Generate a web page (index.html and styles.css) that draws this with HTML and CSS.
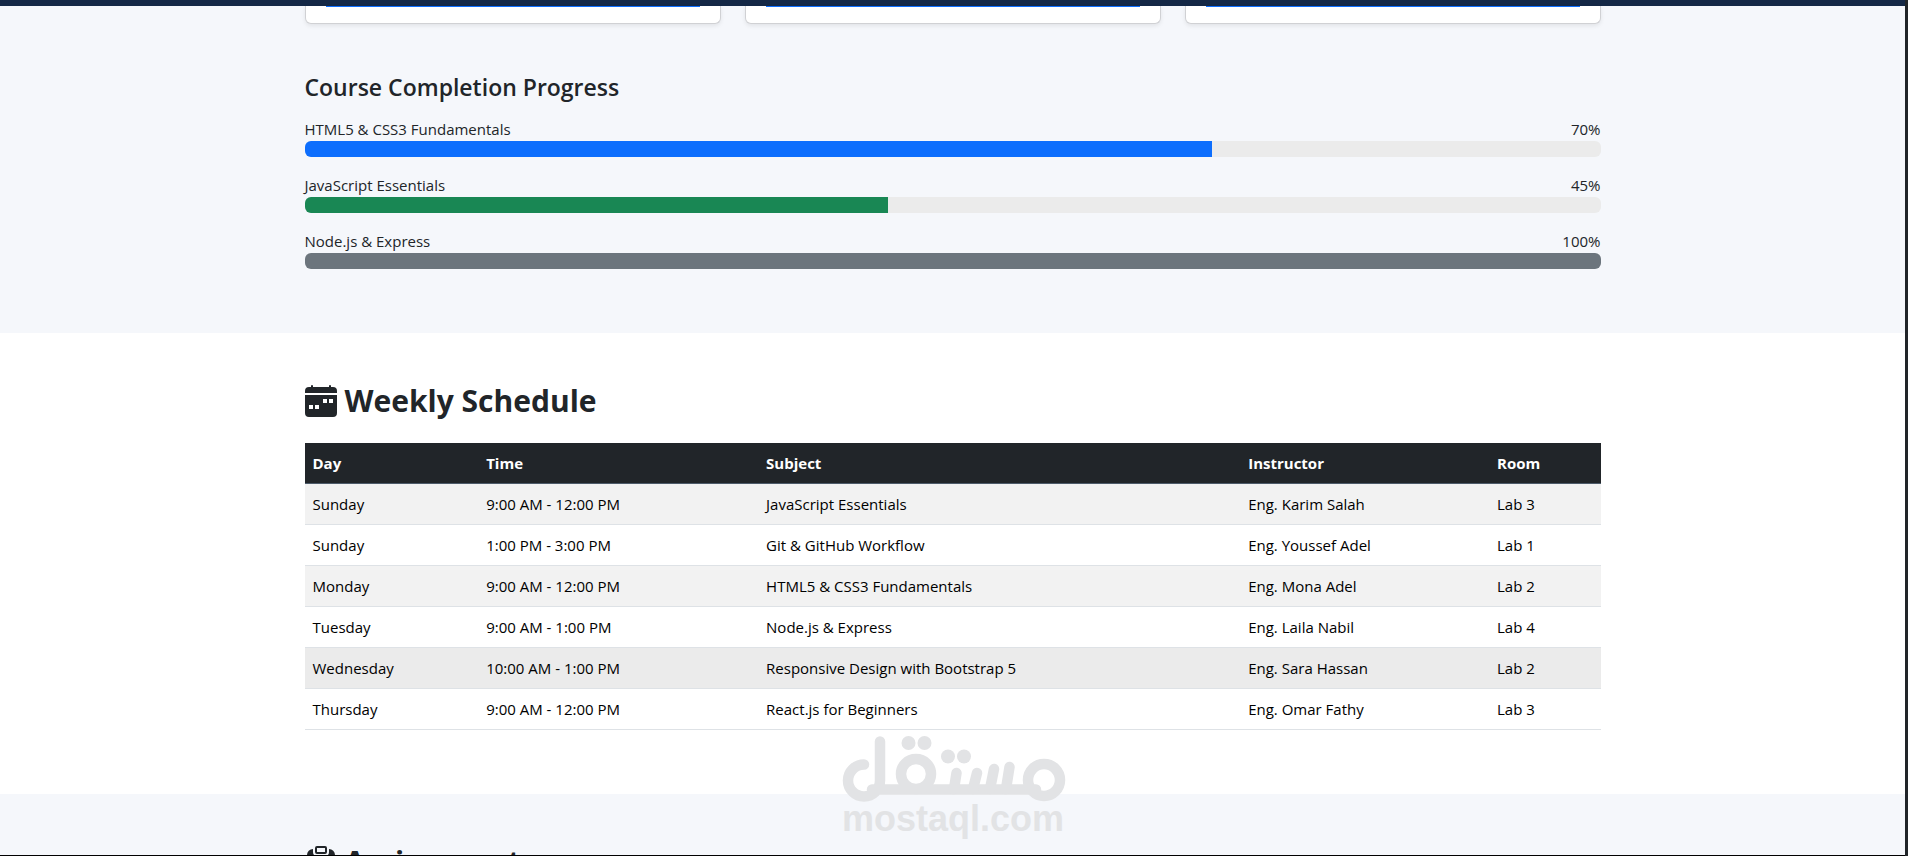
FILE: index.html
```html
<!DOCTYPE html>
<html lang="en">

<head>
  <meta charset="UTF-8">
  <meta name="viewport" content="width=device-width, initial-scale=1.0">
  <title>Student Dashboard</title>
  <link rel="stylesheet" href="styles.css">
</head>

<body>
  <div class="page">
    <nav class="navbar"></nav>

    <section class="section section-light courses">
      <div class="container">
        <div class="course-grid">
          <div class="course-card"><a href="#" class="course-button" aria-label="View course"></a></div>
          <div class="course-card"><a href="#" class="course-button" aria-label="View course"></a></div>
          <div class="course-card"><a href="#" class="course-button" aria-label="View course"></a></div>
        </div>

        <h4 class="progress-title">Course Completion Progress</h4>

        <div class="progress-item">
          <div class="progress-label"><span>HTML5 &amp; CSS3 Fundamentals</span><span>70%</span></div>
          <div class="progress"><div class="progress-bar bar-blue" style="width: 70%"></div></div>
        </div>
        <div class="progress-item">
          <div class="progress-label"><span>JavaScript Essentials</span><span>45%</span></div>
          <div class="progress"><div class="progress-bar bar-green" style="width: 45%"></div></div>
        </div>
        <div class="progress-item">
          <div class="progress-label"><span>Node.js &amp; Express</span><span>100%</span></div>
          <div class="progress"><div class="progress-bar bar-gray" style="width: 100%"></div></div>
        </div>
      </div>
    </section>

    <section class="section" id="schedule">
      <div class="container">
        <h2 class="section-title">
          <svg class="icon" viewBox="0 0 32 32" aria-hidden="true">
            <path fill="currentColor" d="M6 1a1 1 0 0 1 2 0v1h16V1a1 1 0 0 1 2 0v1h2a4 4 0 0 1 4 4v2H0V6a4 4 0 0 1 4-4h2z"/>
            <path fill="currentColor" fill-rule="evenodd" d="M0 10h32v18a4 4 0 0 1-4 4H4a4 4 0 0 1-4-4zM18 14v4h4v-4zM24 14v4h4v-4zM4 20v4h4v-4zM10 20v4h4v-4z"/>
          </svg>
          Weekly Schedule
        </h2>

        <table class="schedule-table">
          <thead>
            <tr>
              <th class="col-day">Day</th>
              <th class="col-time">Time</th>
              <th class="col-subject">Subject</th>
              <th class="col-instructor">Instructor</th>
              <th class="col-room">Room</th>
            </tr>
          </thead>
          <tbody>
            <tr><td>Sunday</td><td>9:00 AM - 12:00 PM</td><td>JavaScript Essentials</td><td>Eng. Karim Salah</td><td>Lab 3</td></tr>
            <tr><td>Sunday</td><td>1:00 PM - 3:00 PM</td><td>Git &amp; GitHub Workflow</td><td>Eng. Youssef Adel</td><td>Lab 1</td></tr>
            <tr><td>Monday</td><td>9:00 AM - 12:00 PM</td><td>HTML5 &amp; CSS3 Fundamentals</td><td>Eng. Mona Adel</td><td>Lab 2</td></tr>
            <tr><td>Tuesday</td><td>9:00 AM - 1:00 PM</td><td>Node.js &amp; Express</td><td>Eng. Laila Nabil</td><td>Lab 4</td></tr>
            <tr class="active"><td>Wednesday</td><td>10:00 AM - 1:00 PM</td><td>Responsive Design with Bootstrap 5</td><td>Eng. Sara Hassan</td><td>Lab 2</td></tr>
            <tr><td>Thursday</td><td>9:00 AM - 12:00 PM</td><td>React.js for Beginners</td><td>Eng. Omar Fathy</td><td>Lab 3</td></tr>
          </tbody>
        </table>
      </div>
    </section>

    <section class="section section-light" id="assignments">
      <div class="container">
        <h2 class="section-title">
          <svg class="icon" viewBox="0 0 32 32" aria-hidden="true">
            <rect x="11" y="1" width="10" height="6" rx="1" fill="none" stroke="currentColor" stroke-width="2"/>
            <path fill="currentColor" d="M8 3v3a4 4 0 0 0 4 4h8a4 4 0 0 0 4-4V3a6 6 0 0 1 6 6v18a5 5 0 0 1-5 5H7a5 5 0 0 1-5-5V9a6 6 0 0 1 6-6z"/>
          </svg>
          Assignments
        </h2>
      </div>
    </section>

    <svg class="watermark" viewBox="0 0 224 104" aria-hidden="true">
      <g fill="none" stroke="currentColor" stroke-width="10.500" stroke-linecap="round">
        <path d="M22 28.500A16 16 0 1 0 38 44.500V5.500M30 53.500H194"/>
        <circle cx="74" cy="38" r="15"/>
        <path d="M112 53l2.500-16M131 53l4-16M148 53l4-20M164 53l3.500-22"/>
        <circle cx="202" cy="44" r="16"/>
      </g>
      <g fill="currentColor">
        <circle cx="66.500" cy="7" r="7"/><circle cx="82.500" cy="7" r="7"/>
        <circle cx="106" cy="20.500" r="7"/><circle cx="122" cy="20.500" r="7"/>
      </g>
      <text class="watermark-text" x="0" y="95">mostaql.com</text>
    </svg>
  </div>
</body>

</html>
```
FILE: styles.css
```css
* {
  box-sizing: border-box;
}

body {
  margin: 0;
  height: 100vh;
  overflow: hidden;
  font-family: "Open Sans", "Noto Sans", sans-serif;
  font-size: 15px;
  line-height: 24px;
  color: #212529;
  background-color: #212529;
}

.page {
  position: relative;
  height: 100vh;
  margin-right: 3px;
  overflow: hidden;
  background-color: #fff;
  border-bottom: 1px solid #000;
}

.navbar {
  height: 6px;
  background-color: #142846;
}

.container {
  max-width: 1320px;
  margin: 0 auto;
  padding: 0 12px;
}

.section {
  padding: 48px 0;
}

.section-light {
  background-color: #f5f7fb;
}

.courses {
  padding-top: 0;
}

.course-grid {
  display: grid;
  grid-template-columns: repeat(3, 1fr);
  gap: 24px;
  margin-bottom: 48px;
}

.course-card {
  height: 18px;
  padding: 0 16px;
  background-color: #fff;
  border: 1px solid #d0d1d4;
  border-top: 0;
  border-radius: 0 0 6px 6px;
  box-shadow: 0 2px 4px rgba(0, 0, 0, 0.08);
}

.course-button {
  display: block;
  height: 1px;
  margin: 0 4px;
  background-color: #0d6efd;
}

.progress-title {
  margin: 0 0 14px;
  font-size: 23px;
  font-weight: 600;
  line-height: 31px;
}

.progress-item {
  margin-bottom: 16px;
}

.progress-label {
  display: flex;
  justify-content: space-between;
}

.progress {
  height: 16px;
  background-color: #ebebeb;
  border-radius: 6px;
  overflow: hidden;
}

.progress-bar {
  height: 100%;
}

.bar-blue {
  background-color: #0d6efd;
}

.bar-green {
  background-color: #198754;
}

.bar-gray {
  background-color: #6c757d;
}

.section-title {
  display: flex;
  align-items: center;
  gap: 8px;
  margin: 0 0 22px;
  font-size: 30px;
  font-weight: 700;
  line-height: 40px;
}

.icon {
  width: 32px;
  height: 32px;
}

.schedule-table {
  width: 100%;
  margin-bottom: 16px;
  table-layout: fixed;
  border-collapse: separate;
  border-spacing: 0;
  color: #000;
}

.schedule-table th,
.schedule-table td {
  padding: 8px;
  text-align: left;
  border-bottom: 1px solid #dee2e6;
}

.schedule-table th {
  color: #fff;
  background-color: #212529;
  border-bottom-color: #4d5b6a;
}

.schedule-table tbody tr:nth-child(odd) {
  background-color: #f2f2f2;
}

.schedule-table tbody tr.active {
  background-color: #ebebeb;
}

.col-day {
  width: 13.4%;
}

.col-time {
  width: 21.6%;
}

.col-subject {
  width: 37.2%;
}

.col-instructor {
  width: 19.2%;
}

.col-room {
  width: 8.6%;
}

/* logo over the page, centered near the bottom */
.watermark {
  position: absolute;
  left: 50%;
  bottom: 15px;
  width: 224px;
  height: 104px;
  margin-left: -111px;
  overflow: visible;
  color: #e2e3e5;
}

.watermark-text {
  font-family: "Liberation Sans", Arial, sans-serif;
  font-size: 36px;
  font-weight: 700;
  fill: currentColor;
}
```
